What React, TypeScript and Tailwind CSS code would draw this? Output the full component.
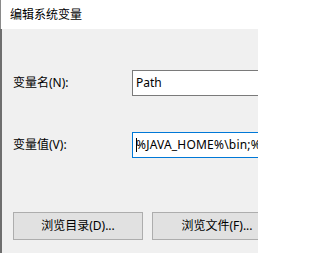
import React from "react";

export default function App() {
  const font = { fontFamily: '"Noto Sans", "Noto Sans CJK SC", sans-serif' };
  return (
    <div
      className="w-[258px] h-[253px] overflow-hidden bg-[#f0f0f0] flex flex-col text-[12px] text-black"
      style={font}
    >
      <div className="h-[29px] shrink-0 bg-white flex items-center pl-[9px] border-l border-[#8a8a8a]">
        <span className="leading-none">编辑系统变量</span>
      </div>
      <div className="flex-1 flex flex-col border-l-2 border-[#6e6e6e] pl-[11px] overflow-hidden">
        <div className="mt-[41px] flex items-center h-[26px]">
          <div className="w-[119px] shrink-0 leading-none">变量名(N):</div>
          <div className="h-[26px] w-[200px] shrink-0 bg-white border border-[#7a7a7a] flex items-center pl-[3px]">
            <span className="leading-none">Path</span>
          </div>
        </div>
        <div className="mt-[36px] flex items-center h-[26px]">
          <div className="w-[119px] shrink-0 leading-none">变量值(V):</div>
          <div className="h-[26px] w-[200px] shrink-0 bg-white border border-[#0078d7] flex items-center pl-[3px] relative overflow-hidden">
            <span className="leading-none whitespace-nowrap tracking-[0.2px]">%JAVA_HOME%\bin;%JAVA_HOME%</span>
            <span className="absolute left-[3px] top-[5px] h-[14px] w-px bg-black" />
          </div>
        </div>
        <div className="mt-[54px] flex gap-[9px]">
          <button className="h-[28px] w-[130px] shrink-0 bg-[#e1e1e1] border border-[#adadad] flex items-center justify-center leading-none">
            浏览目录(D)...
          </button>
          <button className="h-[28px] w-[130px] shrink-0 bg-[#e1e1e1] border border-[#adadad] flex items-center justify-center leading-none">
            浏览文件(F)...
          </button>
        </div>
      </div>
    </div>
  );
}
